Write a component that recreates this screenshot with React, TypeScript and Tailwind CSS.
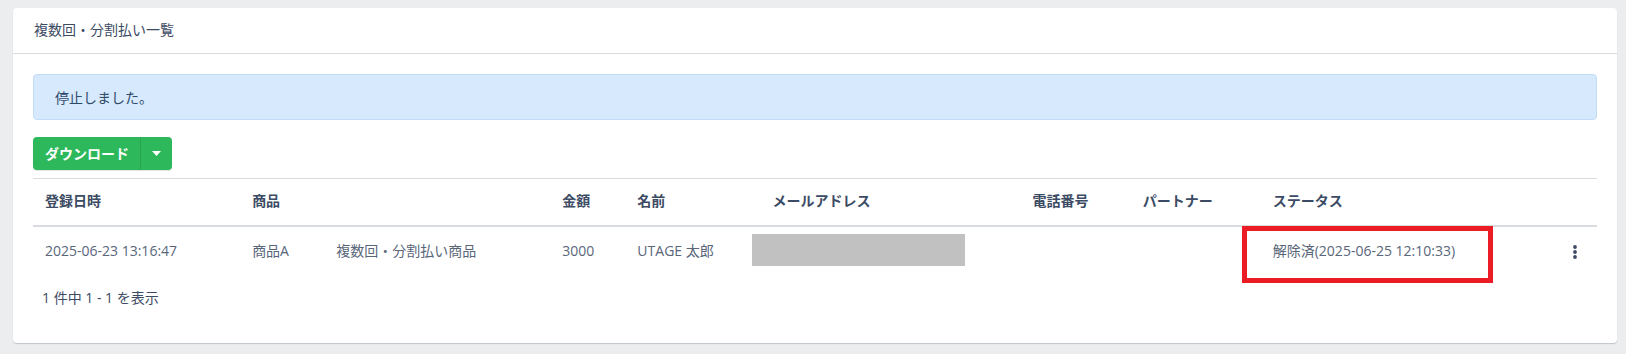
import React from 'react';

const headers = [
  { label: '登録日時', cls: 'pl-3' },
  { label: '商品', cls: 'pl-3' },
  { label: '', cls: 'pl-3' },
  { label: '金額', cls: 'pl-3' },
  { label: '名前', cls: 'pl-3' },
  { label: 'メールアドレス', cls: 'pl-[32px]' },
  { label: '電話番号', cls: 'pl-3' },
  { label: 'パートナー', cls: 'pl-3' },
  { label: 'ステータス', cls: 'pl-3' },
  { label: '', cls: 'pl-3' },
];

function KebabIcon() {
  return (
    <svg width="6" height="16" viewBox="0 0 6 16" className="inline-block">
      <circle cx="3" cy="3" r="1.9" fill="#3c4b64" />
      <circle cx="3" cy="8" r="1.9" fill="#3c4b64" />
      <circle cx="3" cy="13" r="1.9" fill="#3c4b64" />
    </svg>
  );
}

export default function App() {
  return (
    <div className="h-[354px] w-full bg-[#ebedef] pl-[13px] pr-[9px] pt-[8px] font-['Open_Sans','Noto_Sans_CJK_JP',sans-serif] text-[14px] text-[#3c4b64]">
      <div className="rounded-[4px] bg-white shadow-[0_1px_1px_rgba(60,75,100,0.25)]">
        {/* Header */}
        <div className="flex h-[46px] items-center border-b border-[#d8dbe0] px-[21px] pb-[2px] text-[#3c4b64]">
          複数回・分割払い一覧
        </div>

        {/* Body */}
        <div className="px-[20px] pb-[35px] pt-[20px]">
          <div className="flex h-[46px] items-center rounded-[4px] border border-[#c2dcf8] bg-[#d6e9fd] px-[21px] text-[#304a69]">
            停止しました。
          </div>

          <div className="mt-[17px] flex">
            <div className="flex h-[33px] w-[139px] overflow-hidden rounded-[4px] bg-[#2eb85c] text-white shadow-[0_1px_1px_rgba(0,0,0,0.12)]">
              <button type="button" className="flex flex-1 items-center pl-[12px] font-semibold">
                ダウンロード
              </button>
              <div className="w-px bg-[#28a452]" />
              <button type="button" className="flex w-[31px] items-center justify-center">
                <svg width="9" height="5" viewBox="0 0 9 5">
                  <path d="M0 0h9L4.5 5z" fill="#ffffff" />
                </svg>
              </button>
            </div>
          </div>

          <table className="mt-[8px] w-full table-fixed border-collapse">
            <colgroup>
              <col className="w-[207px]" />
              <col className="w-[84px]" />
              <col className="w-[226px]" />
              <col className="w-[75px]" />
              <col className="w-[115px]" />
              <col className="w-[280px]" />
              <col className="w-[110px]" />
              <col className="w-[130px]" />
              <col className="w-[292px]" />
              <col className="w-[44px]" />
            </colgroup>
            <thead>
              <tr className="h-[47px] border-t border-b-2 border-[#d8dbe0]">
                {headers.map((h, i) => (
                  <th key={i} className={`${h.cls} pb-[2px] text-left font-bold text-[#3c4b64]`}>
                    {h.label}
                  </th>
                ))}
              </tr>
            </thead>
            <tbody className="text-[#59667a]">
              <tr className="h-[48px]">
                <td className="pl-3">2025-06-23 13:16:47</td>
                <td className="pl-3">商品A</td>
                <td className="pl-3">複数回・分割払い商品</td>
                <td className="pl-3">3000</td>
                <td className="pl-3">UTAGE 太郎</td>
                <td className="pl-3">
                  <div className="h-[32px] w-[213px] bg-[#c1c1c1]" />
                </td>
                <td className="pl-3"></td>
                <td className="pl-3"></td>
                <td className="relative pl-3">
                  解除済(2025-06-25 12:10:33)
                  <div className="absolute left-[-19px] top-[-1px] h-[57px] w-[251px] border-[5px] border-[#ec1c24]" />
                </td>
                <td className="text-center">
                  <KebabIcon />
                </td>
              </tr>
            </tbody>
          </table>

          <div className="mt-[13px] pl-[9px] text-[#3c4b64]">1 件中 1 - 1 を表示</div>
        </div>
      </div>
    </div>
  );
}
